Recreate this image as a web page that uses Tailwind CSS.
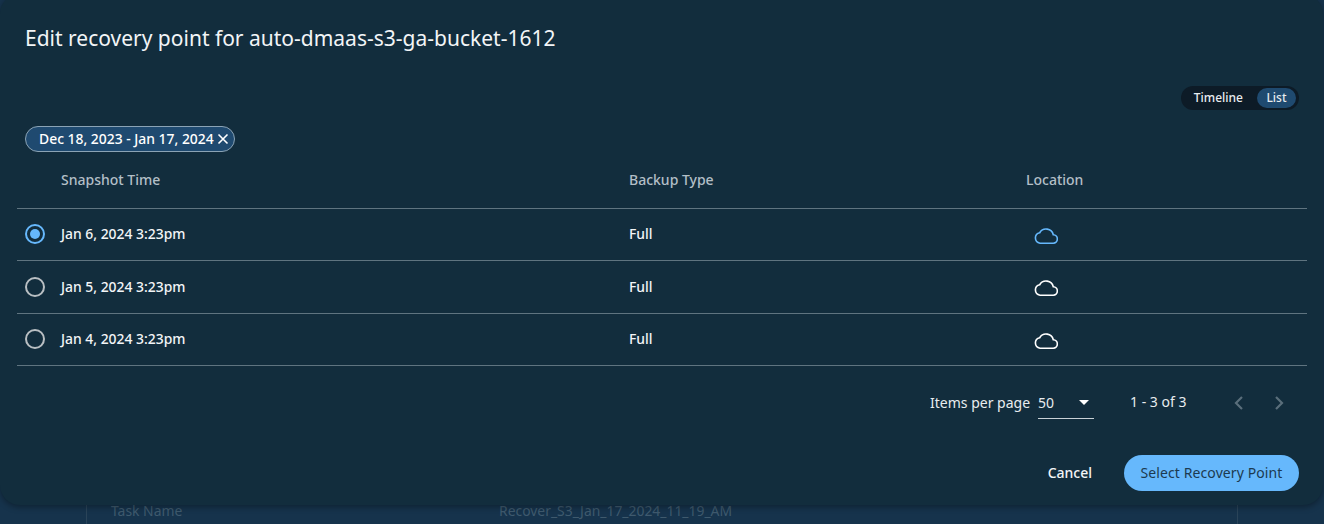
<!DOCTYPE html>
<html lang="en">
<head>
  <meta charset="UTF-8" />
  <title>Edit recovery point</title>
  <script src="https://cdn.jsdelivr.net/npm/@tailwindcss/browser@4"></script>
</head>
<body class="bg-[#16334c] font-['Noto_Sans',sans-serif] overflow-hidden">
  <div class="relative h-[524px] w-[1324px] overflow-hidden">
    <!-- page behind the dialog -->
    <div class="absolute top-[480px] left-[86px] flex h-[44px] w-[1152px] items-end border-x border-[#2a4459] pb-[2px] pl-[24px] text-[13.9px] text-[#3f5a6e]">
      <span class="w-[388px]">Task Name</span>
      <span>Recover_S3_Jan_17_2024_11_19_AM</span>
    </div>

    <!-- dialog -->
    <div class="absolute top-[-6px] left-0 flex h-[511px] w-[1323px] flex-col rounded-[20px] bg-[#122d3d] pt-[6px] text-white shadow-[0_2px_6px_rgba(0,0,0,0.35)]">
      <h1 class="pt-[24px] pl-[25px] text-[21px] leading-[28px] text-[#f2f5f7]">Edit recovery point for auto-dmaas-s3-ga-bucket-1612</h1>

      <div class="mt-[34px] flex justify-end pr-[24px]">
        <div class="flex h-[24px] items-center rounded-full bg-[#0d1b27] py-[2px] pr-[3px] pl-[2px] text-[12px] font-medium">
          <span class="pr-[11px] pl-[11px] text-[#e8ecef]">Timeline</span>
          <span class="ml-[3px] flex h-[20px] w-[39px] items-center justify-center rounded-full bg-[#1f4a70] text-[#e8ecef]">List</span>
        </div>
      </div>

      <div class="mt-[16px] flex pl-[25px]">
        <span class="flex h-[26px] w-[210px] items-center gap-[3px] rounded-full border border-[#8ba3b5] bg-[#1f4a70] pl-[13px] text-[13.9px] font-medium text-white">
          Dec 18, 2023 - Jan 17, 2024
          <svg class="h-[12px] w-[12px]" viewBox="0 0 12 12" fill="none" stroke="currentColor" stroke-width="1.6"><path d="M1.5 1.5l9 9M10.5 1.5l-9 9" /></svg>
        </span>
      </div>

      <!-- table -->
      <div class="mt-[2px] ml-[17px] w-[1290px] text-[13.9px]">
        <div class="grid h-[55px] grid-cols-[44px_568px_397px_1fr] items-center border-b border-[#5f7480] pb-[4px] text-[14px] font-medium text-[#b3bfc7]">
          <span></span><span>Snapshot Time</span><span>Backup Type</span><span>Location</span>
        </div>
        <div class="grid h-[52px] grid-cols-[44px_568px_397px_1fr] items-center border-b border-[#5f7480] font-medium text-[#f2f5f7]">
          <span class="mb-[1px] ml-[8px] flex h-[20px] w-[20px] items-center justify-center rounded-full border-2 border-[#66b8fc]"><span class="h-[10px] w-[10px] rounded-full bg-[#66b8fc]"></span></span>
          <span>Jan 6, 2024 3:23pm</span><span>Full</span>
          <svg class="mt-[2px] ml-[8px] h-[16px] w-[24px] text-[#66b8fc]" viewBox="0 0 24 16" fill="none" stroke="currentColor" stroke-width="1.6"><path d="M6 15.2H19a4.2 4.2 0 0 0 .3-8.4A7.4 7.4 0 0 0 5.7 4.75 5.3 5.3 0 0 0 6 15.2Z" /></svg>
        </div>
        <div class="grid h-[53px] grid-cols-[44px_568px_397px_1fr] items-center border-b border-[#5f7480] font-medium text-[#f2f5f7]">
          <span class="mb-[1px] ml-[8px] h-[20px] w-[20px] rounded-full border-2 border-[#b9bfc3]"></span>
          <span>Jan 5, 2024 3:23pm</span><span>Full</span>
          <svg class="mt-[2px] ml-[8px] h-[16px] w-[24px] text-white" viewBox="0 0 24 16" fill="none" stroke="currentColor" stroke-width="1.6"><path d="M6 15.2H19a4.2 4.2 0 0 0 .3-8.4A7.4 7.4 0 0 0 5.7 4.75 5.3 5.3 0 0 0 6 15.2Z" /></svg>
        </div>
        <div class="grid h-[52px] grid-cols-[44px_568px_397px_1fr] items-center border-b border-[#5f7480] font-medium text-[#f2f5f7]">
          <span class="mb-[1px] ml-[8px] h-[20px] w-[20px] rounded-full border-2 border-[#b9bfc3]"></span>
          <span>Jan 4, 2024 3:23pm</span><span>Full</span>
          <svg class="mt-[2px] ml-[8px] h-[16px] w-[24px] text-white" viewBox="0 0 24 16" fill="none" stroke="currentColor" stroke-width="1.6"><path d="M6 15.2H19a4.2 4.2 0 0 0 .3-8.4A7.4 7.4 0 0 0 5.7 4.75 5.3 5.3 0 0 0 6 15.2Z" /></svg>
        </div>
      </div>

      <!-- paginator -->
      <div class="mt-[19px] flex h-[36px] items-center pl-[930px] text-[14px] text-[#e8ecef]">
        <span class="mb-[2px]">Items per page</span>
        <div class="ml-[8px] flex h-[32px] w-[56px] items-center justify-between border-b border-[#c9d1d6] pr-[4px]">
          <span>50</span>
          <span class="mr-[1px] h-0 w-0 border-x-[5px] border-t-[5px] border-x-transparent border-t-white"></span>
        </div>
        <span class="mb-[4px] ml-[36px]">1 - 3 of 3</span>
        <svg class="ml-[43px] h-[20px] w-[20px] text-[#5a6e7b]" viewBox="0 0 20 20" fill="none" stroke="currentColor" stroke-width="2.2"><path d="M13 4l-6 6 6 6" /></svg>
        <svg class="ml-[20px] h-[20px] w-[20px] text-[#5a6e7b]" viewBox="0 0 20 20" fill="none" stroke="currentColor" stroke-width="2.2"><path d="M7 4l6 6-6 6" /></svg>
      </div>

      <!-- footer -->
      <div class="mt-[34px] flex items-center justify-end pr-[24px] text-[14px]">
        <span class="mb-[2px] font-medium text-[#f2f5f7]">Cancel</span>
        <span class="ml-[32px] flex h-[36px] w-[175px] items-center justify-center rounded-full bg-[#66b8fc] pb-[2px] tracking-[0.1px] text-[#1c3a50]">Select Recovery Point</span>
      </div>
    </div>
  </div>
</body>
</html>
